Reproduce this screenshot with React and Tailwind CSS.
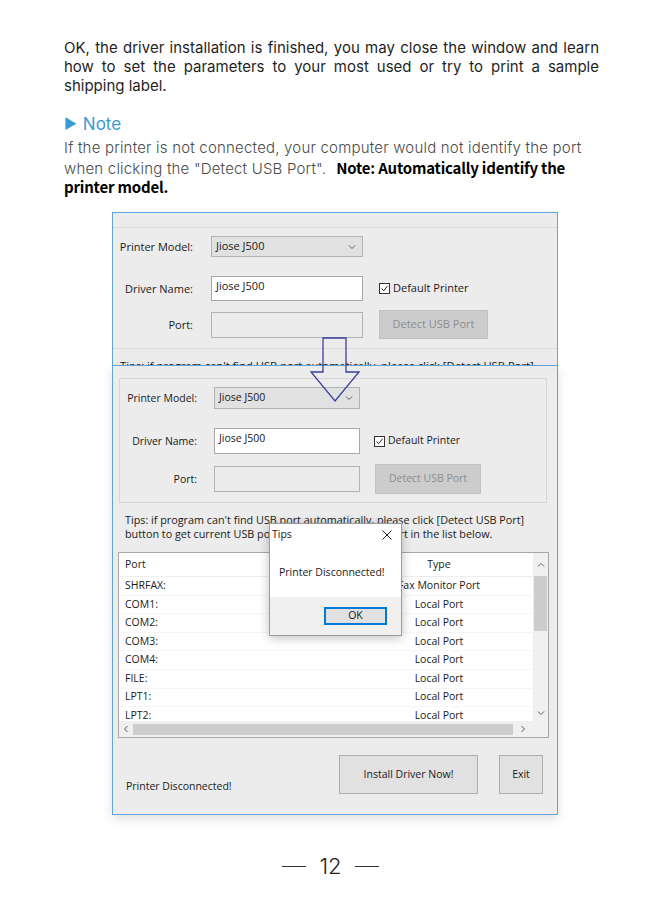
import React from 'react';

const ui = "font-['Open_Sans',sans-serif] text-[#1a1a1a]";

const Chevron = ({ dir = 'down', className = '' }) => {
  const paths = {
    down: 'M1 1.5 L4 4.5 L7 1.5',
    up: 'M1 4.5 L4 1.5 L7 4.5',
  };
  const side = {
    left: 'M4.5 1 L1.5 4 L4.5 7',
    right: 'M1.5 1 L4.5 4 L1.5 7',
  };
  if (side[dir]) {
    return (
      <svg width="6" height="8" viewBox="0 0 6 8" className={className}>
        <path d={side[dir]} fill="none" stroke="#606060" strokeWidth="1" />
      </svg>
    );
  }
  return (
    <svg width="8" height="6" viewBox="0 0 8 6" className={className}>
      <path d={paths[dir]} fill="none" stroke="#606060" strokeWidth="1" />
    </svg>
  );
};

const CheckBox = () => (
  <span className="flex w-[11px] h-[11px] items-center justify-center border border-[#333] bg-white">
    <svg width="9" height="9" viewBox="0 0 9 9">
      <path d="M1.5 4.5 L3.6 6.8 L7.6 1.8" fill="none" stroke="#222" strokeWidth="1" />
    </svg>
  </span>
);

const ports = [
  ['SHRFAX:', 'Fax Monitor Port'],
  ['COM1:', 'Local Port'],
  ['COM2:', 'Local Port'],
  ['COM3:', 'Local Port'],
  ['COM4:', 'Local Port'],
  ['FILE:', 'Local Port'],
  ['LPT1:', 'Local Port'],
  ['LPT2:', 'Local Port'],
];

// first screenshot, cut off where the second one starts
const WindowOne = () => (
  <div className={`h-[153px] overflow-hidden border-x border-t border-[#5fa4dc] bg-[#ececec] ${ui} text-[11px]`}>
    <div className="mt-[14px] border-t border-[#d9d9d9]" />
    <div className="mt-[8px] flex items-center h-[21px]">
      <span className="w-[80px] text-right leading-none">Printer Model:</span>
      <div className="ml-[18px] w-[152px] h-[21px] flex items-center justify-between pl-[4px] pr-[6px] bg-[#e1e1e1] border border-[#b3b3b3]">
        <span>Jiose J500</span>
        <Chevron />
      </div>
    </div>
    <div className="mt-[19px] flex items-center h-[25px]">
      <span className="w-[80px] text-right leading-none">Driver Name:</span>
      <div className="ml-[18px] w-[152px] h-[25px] pl-[4px] pt-[1px] bg-white border border-[#a8a8a8] leading-[16px]">
        Jiose J500
      </div>
      <div className="ml-[16px] flex items-center gap-[3px]">
        <CheckBox />
        <span>Default Printer</span>
      </div>
    </div>
    <div className="mt-[9px] flex items-center h-[29px]">
      <span className="w-[80px] text-right leading-none">Port:</span>
      <div className="ml-[18px] w-[152px] h-[26px] bg-[#ececec] border border-[#b3b3b3]" />
      <div className="ml-[16px] w-[109px] h-[29px] flex items-center justify-center bg-[#cccccc] border border-[#c2c2c2] text-[#8c8c8c]">
        Detect USB Port
      </div>
    </div>
    <div className="mt-[9px] border-t border-[#d9d9d9]" />
    <div className="mt-[10px] pl-[7px] leading-[14px] whitespace-nowrap text-[11.2px]">
      Tips: if program can&apos;t find USB port automatically, please click [Detect USB Port]
    </div>
  </div>
);

const Dialog = () => (
  <div className="absolute left-[156px] top-[157px] w-[133px] h-[113px] flex flex-col bg-white border border-[#9c9c9c] shadow-[0_2px_10px_rgba(0,0,0,0.25)]">
    <div className="h-[21px] flex items-center justify-between pl-[2px] pr-[9px]">
      <span className="leading-none">Tips</span>
      <svg width="10" height="10" viewBox="0 0 10 10">
        <path d="M0.5 0.5 L9.5 9.5 M9.5 0.5 L0.5 9.5" stroke="#222" strokeWidth="1" />
      </svg>
    </div>
    <div className="flex-1 pl-[9px] pt-[20px] leading-[14px]">Printer Disconnected!</div>
    <div className="h-[38px] bg-[#f0f0f0] flex items-center justify-end pr-[14px]">
      <div className="w-[63px] h-[18px] flex items-center justify-center bg-[#e1e1e1] border border-[#0078d7] shadow-[inset_0_0_0_1px_#0078d7]">
        OK
      </div>
    </div>
  </div>
);

const PortList = () => (
  <div className="ml-[5px] w-[431px] h-[186px] flex flex-col bg-white border border-[#a8a8a8]">
    <div className="flex h-[168px]">
      <div className="flex-1 overflow-hidden">
        <div className="grid grid-cols-[255px_130px] h-[24px] items-center border-b border-[#ededed]">
          <span className="pl-[6px]">Port</span>
          <span className="text-center">Type</span>
        </div>
        {ports.map(([port, type]) => (
          <div key={port} className="grid grid-cols-[255px_130px] h-[18.6px] items-center border-b border-[#f6f6f6]">
            <span className="pl-[6px]">{port}</span>
            <span className="text-center">{type}</span>
          </div>
        ))}
      </div>
      <div className="w-[15px] flex flex-col items-center bg-[#f0f0f0]">
        <div className="h-[23px] flex items-center justify-center">
          <Chevron dir="up" />
        </div>
        <div className="w-[13px] h-[55px] bg-[#cdcdcd]" />
        <div className="flex-1" />
        <div className="h-[17px] flex items-center justify-center">
          <Chevron dir="down" />
        </div>
      </div>
    </div>
    <div className="flex h-[16px] bg-[#f0f0f0] items-center">
      <div className="w-[14px] flex justify-center">
        <Chevron dir="left" />
      </div>
      <div className="w-[380px] h-[11px] bg-[#cdcdcd]" />
      <div className="w-[20px] flex justify-center">
        <Chevron dir="right" />
      </div>
    </div>
  </div>
);

const WindowTwo = () => (
  <div className={`relative border border-[#5fa4dc] bg-[#ececec] shadow-[0_4px_10px_rgba(0,0,0,0.12)] ${ui} text-[10.5px]`}>
    <div className="mt-[12px] ml-[6px] w-[428px] border border-[#d6d6d6] pt-[8px] pb-[8px]">
      <div className="flex items-center h-[22px]">
        <span className="w-[77px] text-right leading-none">Printer Model:</span>
        <div className="ml-[17px] w-[146px] h-[22px] flex items-center justify-between pl-[4px] pr-[6px] bg-[#e1e1e1] border border-[#b3b3b3]">
          <span>Jiose J500</span>
          <Chevron />
        </div>
      </div>
      <div className="mt-[19px] flex items-center h-[26px]">
        <span className="w-[77px] text-right leading-none">Driver Name:</span>
        <div className="ml-[17px] w-[146px] h-[26px] pl-[4px] pt-[1px] bg-white border border-[#a8a8a8] leading-[16px]">
          Jiose J500
        </div>
        <div className="ml-[14px] flex items-center gap-[3px]">
          <CheckBox />
          <span>Default Printer</span>
        </div>
      </div>
      <div className="mt-[10px] flex items-center h-[30px]">
        <span className="w-[77px] text-right leading-none">Port:</span>
        <div className="ml-[17px] w-[146px] h-[26px] bg-[#ececec] border border-[#b3b3b3]" />
        <div className="ml-[15px] w-[106px] h-[30px] flex items-center justify-center bg-[#cccccc] border border-[#c2c2c2] text-[#8c8c8c]">
          Detect USB Port
        </div>
      </div>
    </div>

    <div className="mt-[10px] ml-[12px] leading-[14px] whitespace-nowrap text-[10.8px]">
      <div>Tips: if program can&apos;t find USB port automatically, please click [Detect USB Port]</div>
      <div>button to get current USB port, or select the printer port in the list below.</div>
    </div>

    <div className="mt-[11px]">
      <PortList />
    </div>

    <div className="mt-[17px] mb-[20px] flex items-end">
      <span className="ml-[13px] leading-[14px] mb-[1px]">Printer Disconnected!</span>
      <div className="ml-auto w-[139px] h-[39px] flex items-center justify-center bg-[#e1e1e1] border border-[#adadad]">
        Install Driver Now!
      </div>
      <div className="ml-[21px] mr-[14px] w-[44px] h-[39px] flex items-center justify-center bg-[#e1e1e1] border border-[#adadad]">
        Exit
      </div>
    </div>

    <Dialog />
  </div>
);

const App = () => {
  return (
    <div className="w-[661px] min-h-[901px] bg-white pt-[38px]">
      <div className="ml-[64px] w-[535px] font-['Inter',sans-serif]">
        <div className="text-[15px] leading-[19px] text-[#1f1f1f]">
          <div className="whitespace-nowrap text-justify [text-align-last:justify]">
            OK, the driver installation is finished, you may close the window and learn
          </div>
          <div className="whitespace-nowrap text-justify [text-align-last:justify]">
            how to set the parameters to your most used or try to print a sample
          </div>
          <div>shipping label.</div>
        </div>

        <div className="mt-[19px] h-[20px] flex items-center gap-[6px] text-[17px] leading-[20px] text-[#3a9ad6]">
          <span className="text-[14px]">&#9654;</span>
          <span>Note</span>
        </div>

        <div className="mt-[4px] text-[15px] text-[#4a4a4a] font-light tracking-[0.2px]">
          <div className="h-[20px] leading-[20px] whitespace-nowrap">
            If the printer is not connected, your computer would not identify the port
          </div>
          <div className="h-[19px] leading-[19px] whitespace-nowrap">
            when clicking the &quot;Detect USB Port&quot;.
            <span className="ml-[10px] text-[15px] tracking-[-0.2px] font-['Noto_Sans_CJK_SC',sans-serif] font-bold text-black">
              Note: Automatically identify the
            </span>
          </div>
          <div className="h-[19px] leading-[19px] text-[15px] tracking-[-0.2px] font-['Noto_Sans_CJK_SC',sans-serif] font-bold text-black">
            printer model.
          </div>
        </div>
      </div>

      <div className="relative mt-[16px] ml-[112px] w-[446px]">
        <WindowOne />
        <WindowTwo />
        <svg
          width="50"
          height="66"
          viewBox="0 0 50 66"
          className="absolute left-[198px] top-[125px]"
        >
          <path
            d="M13 1 L36 1 L36 35 L49 35 L25 64 L1 35 L13 35 Z"
            fill="none"
            stroke="#3d3f9c"
            strokeWidth="1.3"
          />
        </svg>
      </div>

      <div className="mt-[37px] flex items-center justify-center gap-[13px] font-['Inter',sans-serif] text-[22px] leading-[28px] text-[#222]">
        <span className="w-[24px] h-[1px] bg-[#333]" />
        <span className="font-light">12</span>
        <span className="w-[24px] h-[1px] bg-[#333]" />
      </div>
    </div>
  );
};

export default App;
